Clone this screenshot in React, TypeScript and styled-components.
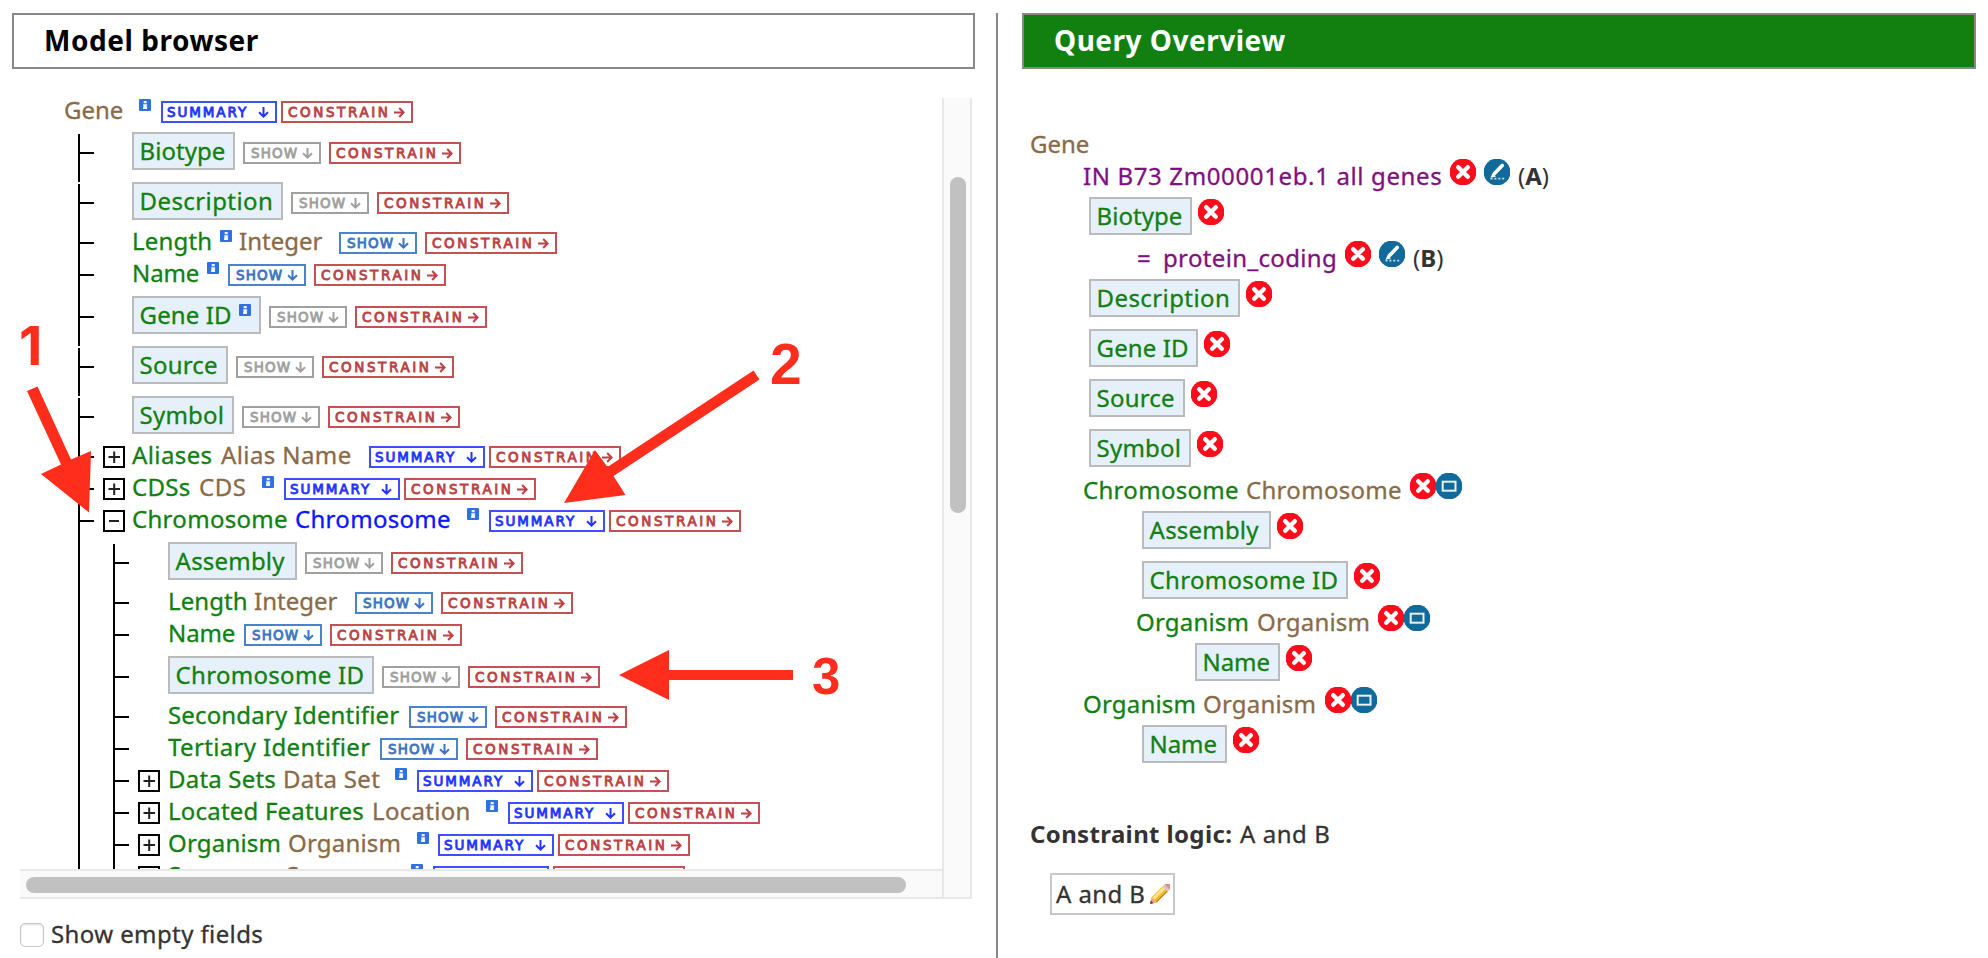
import React from "react";
import styled, { createGlobalStyle, css } from "styled-components";

const GREEN = "#118011";
const BROWN = "#8b6a47";
const PURPLE = "#800f80";
const RED = "#ff2d1c";

const GlobalStyle = createGlobalStyle`
  * { box-sizing: border-box; }
  body {
    margin: 0;
    background: #fff;
    overflow: hidden;
    font-family: "Noto Sans", "Open Sans", sans-serif;
    font-size: 24px;
    color: #333;
  }
`;

const Page = styled.main`
  position: relative;
  display: flex;
  align-items: stretch;
  width: 1988px;
  height: 958px;
  overflow: hidden;
  padding: 13px 12px 0 12px;
`;

const BrowserColumn = styled.section`
  display: flex;
  flex-direction: column;
  width: 963px;
  margin-right: 21px;
`;

const OverviewColumn = styled.section`
  flex: 1;
  border-left: 2px solid #888;
  padding-left: 24px;
`;

const PanelTitle = styled.h2<{ $solid?: boolean }>`
  flex: none;
  margin: 0;
  height: 56px;
  padding-left: 30px;
  border: 2px solid #888;
  background: ${(p) => (p.$solid ? "#118011" : "#fff")};
  color: ${(p) => (p.$solid ? "#fff" : "#000")};
  font-size: 28px;
  font-weight: 700;
  line-height: 51px;
  letter-spacing: ${(p) => (p.$solid ? "0.5px" : "0.55px")};
  white-space: nowrap;
`;

const ScrollPane = styled.div`
  flex: none;
  display: grid;
  grid-template-columns: 922px 30px;
  grid-template-rows: 771px 30px;
  margin: 29px 0 0 8px;
`;

const Viewport = styled.div`
  overflow: hidden;
  margin-top: -10px;
  padding-top: 13px;
`;

const VTrack = styled.div`
  grid-row: 1 / span 2;
  grid-column: 2;
  border: solid #e8e8e8;
  border-width: 0 2px 2px 2px;
  background: #fafafa;
  padding: 79px 0 0 6px;
`;

const VThumb = styled.div`
  width: 16px;
  height: 336px;
  border-radius: 8px;
  background: #c1c1c1;
`;

const HTrack = styled.div`
  grid-row: 2;
  grid-column: 1;
  border: solid #e8e8e8;
  border-width: 2px 0;
  background: #fafafa;
  padding: 6px 0 0 6px;
`;

const HThumb = styled.div`
  width: 880px;
  height: 16px;
  border-radius: 8px;
  background: #c1c1c1;
`;

const RootRow = styled.div`
  display: flex;
  align-items: flex-start;
  height: 31px;
  padding-left: 44px;
`;

const Branch = styled.div<{ $nested?: boolean }>`
  margin-left: ${(p) => (p.$nested ? 35 : 58)}px;
`;

const Outer = styled.div`
  background: linear-gradient(#000, #000) 0 0 / 2px 100% no-repeat;
`;

const Row = styled.div<{ $picked?: boolean; $line: "full" | "gap" }>`
  display: flex;
  align-items: flex-start;
  height: ${(p) => (p.$picked ? 50 : 32)}px;
  padding-top: ${(p) => (p.$picked ? 10 : 0)}px;
  background:
    linear-gradient(#000, #000) 0 ${(p) => (p.$line === "gap" ? 2 : 0)}px / 2px 100% no-repeat,
    linear-gradient(#000, #000) 0 ${(p) => (p.$picked ? 20 : 10)}px / 16px 2px no-repeat;
`;

const Stem = styled.span<{ $nested?: boolean }>`
  flex: none;
  display: flex;
  justify-content: flex-end;
  width: ${(p) => (p.$nested ? 55 : 54)}px;
  padding-right: ${(p) => (p.$nested ? 8 : 7)}px;
`;

const Label = styled.span<{ $w?: number; $c?: string; $ls?: number }>`
  flex: none;
  ${(p) => p.$w && css`width: ${p.$w}px;`}
  line-height: 18px;
  white-space: nowrap;
  color: ${(p) => p.$c || GREEN};
  letter-spacing: ${(p) => p.$ls ?? 0.3}px;
  -webkit-text-stroke: 0.3px currentColor;
`;

const PickedBox = styled.span<{ $w: number }>`
  flex: none;
  display: flex;
  align-items: flex-start;
  width: ${(p) => p.$w}px;
  height: 38px;
  padding: 8px 0 0 5.6px;
  border: 2px solid #bbb;
  background: #e6f0fa;
`;

const TreeBox = styled(PickedBox)`
  margin: -10px 8px 0 0;
`;

const tones = {
  summary: { line: "#3c50ff", text: "#2334ff", w: 116, pad: 4, ls: 1.9, end: 6 },
  show: { line: "#4a83cb", text: "#3c74c4", w: 78, pad: 6, ls: 1.1, end: 6 },
  shown: { line: "#a0a0a0", text: "#a0a0a0", w: 78, pad: 6, ls: 1.1, end: 6 },
  constrain: { line: "#c45254", text: "#bb4245", w: 132, pad: 5, ls: 2.6, end: 6 },
};
type Tone = keyof typeof tones;

const ActionBox = styled.button<{ $t: Tone }>`
  flex: none;
  display: flex;
  align-items: center;
  justify-content: space-between;
  width: ${(p) => tones[p.$t].w}px;
  height: 22px;
  margin: 0 ${(p) => (p.$t === "summary" ? 4 : 8)}px 0 0;
  padding: 0 ${(p) => tones[p.$t].end}px 0 ${(p) => tones[p.$t].pad}px;
  border: 2px solid ${(p) => tones[p.$t].line};
  background: #fff;
  color: ${(p) => tones[p.$t].text};
  font: 400 13.5px/18px "DejaVu Sans", sans-serif;
  letter-spacing: ${(p) => tones[p.$t].ls}px;
  -webkit-text-stroke: 0.85px currentColor;
  white-space: nowrap;
  svg { flex: none; }
`;

const words: Record<Tone, string> = { summary: "SUMMARY", show: "SHOW", shown: "SHOW", constrain: "CONSTRAIN" };

function Action({ tone }: { tone: Tone }) {
  return (
    <ActionBox $t={tone}>
      {words[tone]}
      <svg width="11" height="11" viewBox="0 0 11 11" fill="none" stroke="currentColor" strokeWidth="2">
        {tone === "constrain" ? (
          <path d="M0 5.5H10M5.2 1L9.6 5.5L5.2 10" />
        ) : (
          <path d="M5.5 0V10M1 5.2L5.5 9.6L10 5.2" />
        )}
      </svg>
    </ActionBox>
  );
}

const InfoSlot = styled.span<{ $w: number }>`
  flex: none;
  width: ${(p) => p.$w}px;
  height: 12px;
  margin-top: -2px;
  svg { display: block; }
`;

function Info({ w }: { w: number }) {
  return (
    <InfoSlot $w={w}>
      <svg width="12" height="12" viewBox="0 0 12 12">
        <rect width="12" height="12" rx="1" fill="#2f70e2" />
        <path d="M4.7 2h3v2.3h-3zM4 5.2h4v4.9H4z" fill="#f3f7ff" />
        <path d="M4 5.2h1v3H4zM7.6 5.2h.6v3h-.6z" fill="#a9c6f5" />
      </svg>
    </InfoSlot>
  );
}

function Toggle({ open }: { open?: boolean }) {
  return (
    <svg width="22" height="22" viewBox="0 0 22 22">
      <rect x="1" y="1" width="20" height="20" fill="#fff" stroke="#000" strokeWidth="2" />
      <path d={open ? "M6 11H16" : "M5.5 11H17M11.2 5.5V17"} stroke="#222" strokeWidth="2" />
    </svg>
  );
}

interface Node {
  label: string;
  w: number;
  ls?: number;
  picked?: boolean;
  info?: number;
  type?: string;
  typeW?: number;
  typeLs?: number;
  typeInfo?: number;
  active?: boolean;
  open?: boolean;
  tools: "show" | "summary";
}

const geneFields: Node[] = [
  { label: "Biotype", w: 103, ls: 0.05, picked: true, tools: "show" },
  { label: "Description", w: 151, ls: 0.4, picked: true, tools: "show" },
  { label: "Length", w: 88, ls: 0.2, info: 19, type: "Integer", typeW: 100, typeLs: 0, tools: "show" },
  { label: "Name", w: 75, ls: -0.1, info: 21, tools: "show" },
  { label: "Gene ID", w: 129, ls: 0.1, picked: true, info: 12, tools: "show" },
  { label: "Source", w: 96, ls: 0.2, picked: true, tools: "show" },
  { label: "Symbol", w: 102, ls: 0.2, picked: true, tools: "show" },
  { label: "Aliases", w: 89, ls: 0.4, type: "Alias Name", typeW: 148, typeLs: 0.4, tools: "summary" },
  { label: "CDSs", w: 67, type: "CDS", typeW: 63, typeLs: 0.5, typeInfo: 22, tools: "summary" },
  { label: "Chromosome", w: 163, type: "Chromosome", typeW: 172, typeInfo: 22, active: true, open: true, tools: "summary" },
];

const chromosomeFields: Node[] = [
  { label: "Assembly", w: 129, ls: 0.2, picked: true, tools: "show" },
  { label: "Length", w: 86, ls: 0.1, type: "Integer", typeW: 101, typeLs: 0, tools: "show" },
  { label: "Name", w: 76, ls: -0.1, tools: "show" },
  { label: "Chromosome ID", w: 206, ls: 0.3, picked: true, tools: "show" },
  { label: "Secondary Identifier", w: 241, ls: 0.15, tools: "show" },
  { label: "Tertiary Identifier", w: 212, ls: 0.35, tools: "show" },
  { label: "Data Sets", w: 115, ls: 0.2, type: "Data Set", typeW: 112, typeInfo: 22, tools: "summary" },
  { label: "Located Features", w: 204, ls: 0.2, type: "Location", typeW: 114, typeInfo: 22, tools: "summary" },
  { label: "Organism", w: 120, ls: 0.2, type: "Organism", typeW: 129, typeLs: 0.2, typeInfo: 21, tools: "summary" },
  { label: "Sequence", w: 118, type: "Sequence", typeW: 125, typeInfo: 22, tools: "summary" },
];

function TreeRow({ node, gap, nested }: { node: Node; gap: boolean; nested?: boolean }) {
  return (
    <Row $picked={node.picked} $line={gap ? "gap" : "full"}>
      <Stem $nested={nested}>{node.tools === "summary" && <Toggle open={node.open} />}</Stem>
      {node.picked ? (
        <TreeBox $w={node.w}>
          <Label $w={node.info ? 99.4 : undefined} $ls={node.ls}>{node.label}</Label>
          {node.info && <Info w={node.info} />}
        </TreeBox>
      ) : (
        <>
          <Label $w={node.w} $ls={node.ls}>{node.label}</Label>
          {node.info && <Info w={node.info} />}
        </>
      )}
      {node.type && (
        <Label $w={node.typeW} $ls={node.typeLs} $c={node.active ? "#0a14ff" : BROWN}>{node.type}</Label>
      )}
      {node.typeInfo && <Info w={node.typeInfo} />}
      <Action tone={node.tools === "summary" ? "summary" : node.picked ? "shown" : "show"} />
      <Action tone="constrain" />
    </Row>
  );
}

function Rows({ nodes, nested }: { nodes: Node[]; nested?: boolean }) {
  return (
    <>
      {nodes.map((n, i) => (
        <TreeRow key={n.label} node={n} nested={nested} gap={!!n.picked && (i === 0 || !!nodes[i - 1].picked)} />
      ))}
    </>
  );
}

const EmptyFields = styled.label`
  display: flex;
  align-items: flex-start;
  margin: 24px 0 0 8px;
  height: 24px;
`;

const Tick = styled.span`
  width: 24px;
  height: 24px;
  margin-right: 7px;
  border: 1.5px solid #c6c6c6;
  border-radius: 5px;
  background: #fff;
  box-shadow: inset 0 1px 2px #ddd;
`;

const EmptyText = styled(Label)`
  padding-top: 2px;
`;

const Overview = styled.div`
  padding: 64px 0 0 8px;
`;

const QRow = styled.div<{ $picked?: boolean; $x: number }>`
  display: flex;
  align-items: flex-start;
  height: ${(p) => (p.$picked ? 50 : 32)}px;
  padding: ${(p) => (p.$picked ? 0 : 2)}px 0 0 ${(p) => p.$x}px;
`;

const IconGroup = styled.span<{ $picked?: boolean; $gap?: number }>`
  flex: none;
  display: flex;
  gap: ${(p) => p.$gap ?? 0}px;
  margin-top: ${(p) => (p.$picked ? 2 : -8)}px;
  margin-left: ${(p) => (p.$picked ? 6 : 0)}px;
`;

const Code = styled.span`
  margin-left: 8px;
  line-height: 18px;
`;

function Remove() {
  return (
    <svg width="26" height="26" viewBox="0 0 26 26">
      <circle cx="13" cy="13" r="13.4" fill="#fd0d1b" />
      <path d="M8.2 8.2L17.8 17.8M17.8 8.2L8.2 17.8" stroke="#fff" strokeWidth="4.4" strokeLinecap="round" />
    </svg>
  );
}

function Edit() {
  return (
    <svg width="26" height="26" viewBox="0 0 26 26">
      <circle cx="13" cy="13" r="13.4" fill="#126a9b" />
      <path d="M18.2 6.4L10.5 14.6" stroke="#fff" strokeWidth="3.6" strokeLinecap="round" />
      <path d="M8.4 14.2L12 17.4L6.6 18.8Z" fill="#fff" />
      <path d="M6.5 19.6H20.5" stroke="#c5dbe8" strokeWidth="1.8" strokeDasharray="2 1.9" />
    </svg>
  );
}

function Collapse() {
  return (
    <svg width="26" height="26" viewBox="0 0 26 26">
      <circle cx="13" cy="13" r="13.4" fill="#126a9b" />
      <rect x="6.7" y="8.7" width="12.8" height="9" fill="none" stroke="#e8f1f6" strokeWidth="2" />
    </svg>
  );
}

function QField({ x, label, w, ls }: { x: number; label: string; w: number; ls?: number }) {
  return (
    <QRow $picked $x={x}>
      <PickedBox $w={w}><Label $ls={ls}>{label}</Label></PickedBox>
      <IconGroup $picked><Remove /></IconGroup>
    </QRow>
  );
}

function QConstraint({ x, parts, code }: { x: number; parts: { t: string; w: number; ls?: number }[]; code: string }) {
  return (
    <QRow $x={x}>
      {parts.map((p) => <Label key={p.t} $w={p.w} $ls={p.ls} $c={PURPLE}>{p.t}</Label>)}
      <IconGroup $gap={8}><Remove /><Edit /></IconGroup>
      <Code>(<b>{code}</b>)</Code>
    </QRow>
  );
}

function QRef({ x, label, w, typeW, ls }: { x: number; label: string; w: number; typeW: number; ls?: number }) {
  return (
    <QRow $x={x}>
      <Label $w={w} $ls={ls}>{label}</Label>
      <Label $w={typeW} $ls={ls} $c={BROWN}>{label}</Label>
      <IconGroup><Remove /><Collapse /></IconGroup>
    </QRow>
  );
}

const Logic = styled.p`
  display: flex;
  margin: 50px 0 0 0;
  line-height: 18px;
  height: 48px;
  b {
    width: 210px;
    letter-spacing: 0.36px;
  }
`;

const LogicBox = styled.div`
  display: flex;
  align-items: flex-start;
  width: 125px;
  height: 42px;
  margin-left: 20px;
  padding: 10px 0 0 4px;
  border: 2px solid #c8c8c8;
  line-height: 18px;
  svg { margin-top: -1px; }
`;

function Pencil() {
  return (
    <svg width="20" height="20" viewBox="0 0 20 20">
      <path d="M0 20L1.6 13.2L6.6 18.4Z" fill="#e9a07c" />
      <path d="M0 20L.8 16.6L3.4 19.2Z" fill="#5a4030" />
      <path d="M1.6 13.2L12.6 2.2L17.8 7.4L6.6 18.4Z" fill="#f0b92e" />
      <path d="M2.6 13.4L13.2 2.8L15.4 5L4.8 15.6Z" fill="#fbe58a" />
      <path d="M5.8 17.6L17 6.6L17.8 7.4L6.6 18.4Z" fill="#c88418" />
      <path d="M12.6 2.2L14.4 .6L19.4 5.8L17.8 7.4Z" fill="#c9ccd0" />
      <path d="M14.4 .6Q15.4 -.2 16.6 0H20V4.6Q20 5.2 19.4 5.8Z" fill="#e58b8b" />
    </svg>
  );
}

const Markup = styled.div`
  position: absolute;
  inset: 0;
  pointer-events: none;
  svg { display: block; }
`;

const Digit = styled.span<{ $x: number; $y: number; $s: number; $family?: string }>`
  position: absolute;
  left: ${(p) => p.$x}px;
  top: ${(p) => p.$y}px;
  color: ${RED};
  font: 700 ${(p) => p.$s}px/56px ${(p) => p.$family || '"Liberation Sans"'}, Arial, sans-serif;
`;

export default function App() {
  return (
    <>
      <GlobalStyle />
      <Page>
        <BrowserColumn>
          <PanelTitle>Model browser</PanelTitle>
          <ScrollPane>
            <Viewport>
              <RootRow>
                <Label $w={75} $ls={0} $c={BROWN}>Gene</Label>
                <Info w={22} />
                <Action tone="summary" />
                <Action tone="constrain" />
              </RootRow>
              <Branch>
                <Rows nodes={geneFields} />
                <Outer>
                  <Branch $nested>
                    <Rows nodes={chromosomeFields} nested />
                  </Branch>
                </Outer>
              </Branch>
            </Viewport>
            <VTrack><VThumb /></VTrack>
            <HTrack><HThumb /></HTrack>
          </ScrollPane>
          <EmptyFields>
            <Tick />
            <EmptyText $c="#333" $ls={0.4}>Show empty fields</EmptyText>
          </EmptyFields>
        </BrowserColumn>

        <OverviewColumn>
          <PanelTitle $solid>Query Overview</PanelTitle>
          <Overview>
            <QRow $x={0}><Label $ls={0} $c={BROWN}>Gene</Label></QRow>
            <QConstraint x={53} parts={[{ t: "IN B73 Zm00001eb.1 all genes", w: 367, ls: 0.63 }]} code="A" />
            <QField x={59} label="Biotype" w={103} ls={0.05} />
            <QConstraint x={107} parts={[{ t: "=", w: 26 }, { t: "protein_coding", w: 182, ls: 0.35 }]} code="B" />
            <QField x={59} label="Description" w={151} ls={0.4} />
            <QField x={59} label="Gene ID" w={109} ls={0.1} />
            <QField x={59} label="Source" w={96} ls={0.2} />
            <QField x={59} label="Symbol" w={102} ls={0.2} />
            <QRef x={53} label="Chromosome" w={163} typeW={164} />
            <QField x={112} label="Assembly" w={129} ls={0.2} />
            <QField x={112} label="Chromosome ID" w={206} />
            <QRef x={106} label="Organism" w={121} typeW={121} ls={0.2} />
            <QField x={165} label="Name" w={85} ls={-0.1} />
            <QRef x={53} label="Organism" w={120} typeW={122} ls={0.2} />
            <QField x={112} label="Name" w={85} ls={-0.1} />
            <Logic><b>Constraint logic:</b> <Label $c="#333" $ls={0.55}>A and B</Label></Logic>
            <LogicBox><Label $w={94} $c="#333" $ls={0.4}>A and B</Label><Pencil /></LogicBox>
          </Overview>
        </OverviewColumn>

        <Markup>
          <svg width="1988" height="958" viewBox="0 0 1988 958" fill={RED}>
            <path d="M27 391L37.5 386.5L71 459.5L91 451L89 512.5L41 474L61 464.5Z" />
            <path d="M753.5 370.5L759.5 379.5L613.5 476L625.5 495L564 503L595 450L607.5 467Z" />
            <path d="M619 675L669 650V670H793V680H669V700Z" />
          </svg>
          <Digit $x={19} $y={318} $s={54} $family="Inter">1</Digit>
          <Digit $x={770} $y={336} $s={57}>2</Digit>
          <Digit $x={812} $y={649} $s={51}>3</Digit>
        </Markup>
      </Page>
    </>
  );
}
